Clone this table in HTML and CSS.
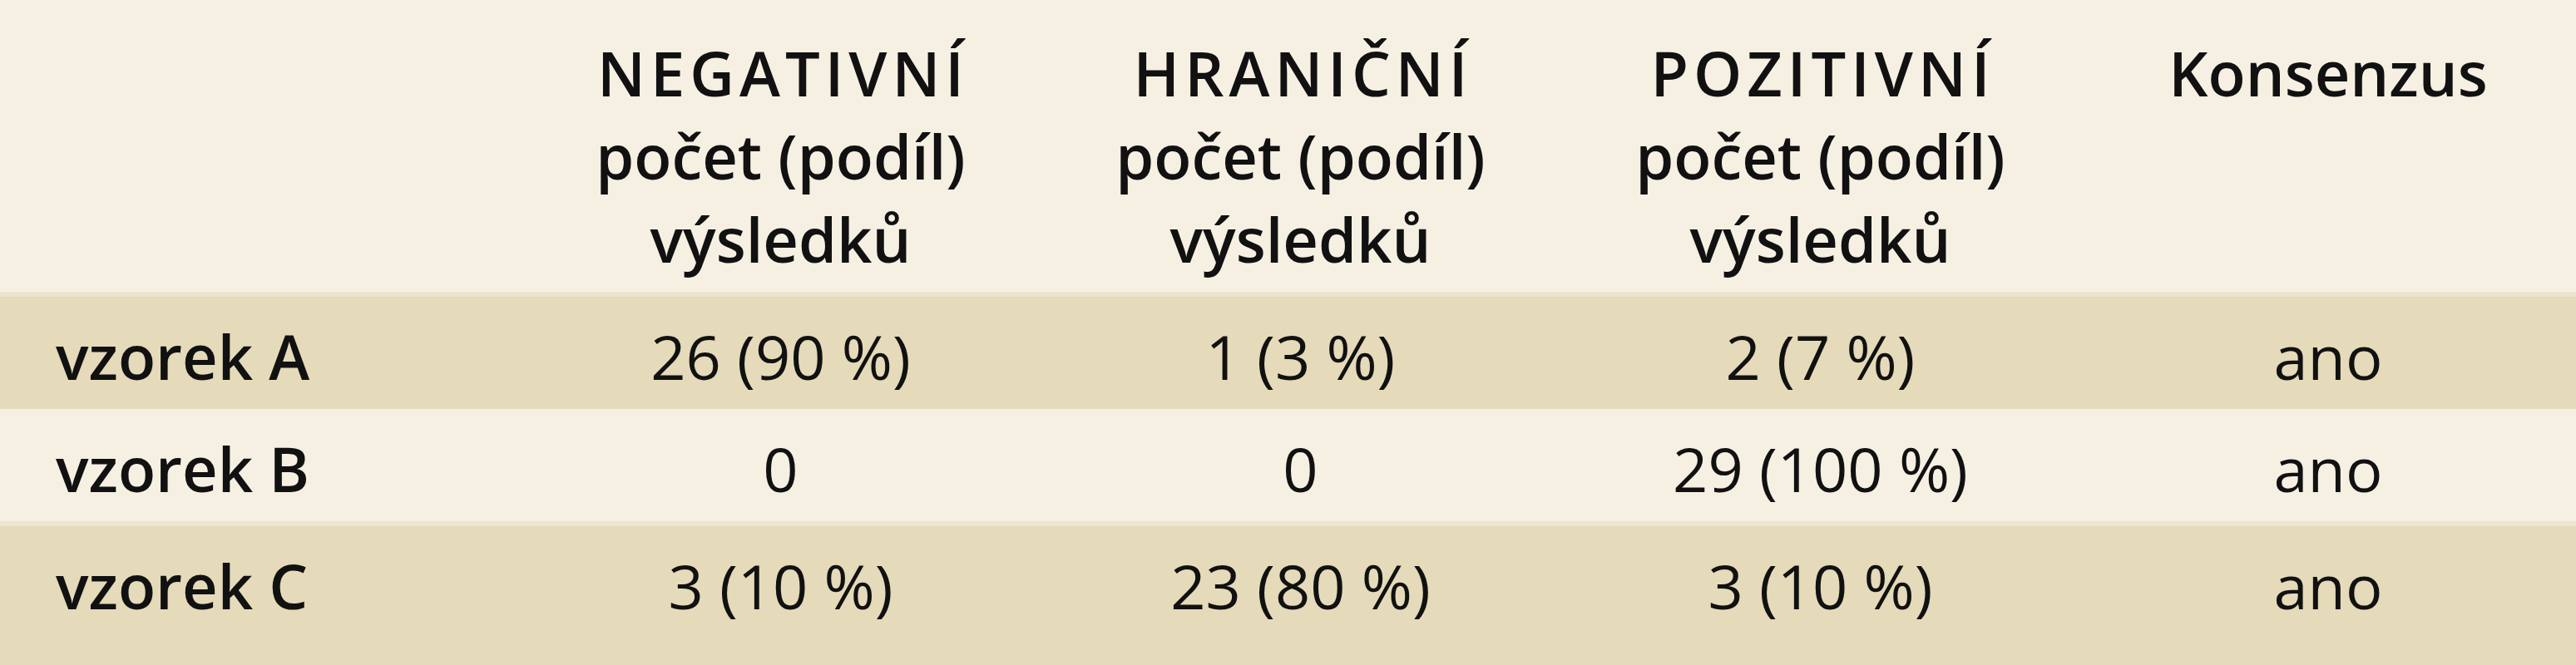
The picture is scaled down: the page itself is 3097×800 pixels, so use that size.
FILE: index.html
```html
<!DOCTYPE html>
<html lang="cs">
<head>
<meta charset="utf-8">
<title>Výsledky vzorků</title>
<link rel="stylesheet" href="styles.css">
</head>
<body>
<div class="table">
  <div class="row head">
    <div class="cell label"></div>
    <div class="cell"><span class="caps">NEGATIVNÍ</span><br>počet (podíl)<br>výsledků</div>
    <div class="cell"><span class="caps">HRANIČNÍ</span><br>počet (podíl)<br>výsledků</div>
    <div class="cell"><span class="caps">POZITIVNÍ</span><br>počet (podíl)<br>výsledků</div>
    <div class="cell">Konsenzus</div>
  </div>
  <div class="row dark">
    <div class="cell label">vzorek A</div>
    <div class="cell">26 (90 %)</div>
    <div class="cell">1 (3 %)</div>
    <div class="cell">2 (7 %)</div>
    <div class="cell">ano</div>
  </div>
  <div class="row light">
    <div class="cell label">vzorek B</div>
    <div class="cell">0</div>
    <div class="cell">0</div>
    <div class="cell">29 (100 %)</div>
    <div class="cell">ano</div>
  </div>
  <div class="row dark sep last">
    <div class="cell label">vzorek C</div>
    <div class="cell">3 (10 %)</div>
    <div class="cell">23 (80 %)</div>
    <div class="cell">3 (10 %)</div>
    <div class="cell">ano</div>
  </div>
</div>
</body>
</html>
```
FILE: styles.css
```css
html, body {
  margin: 0;
  padding: 0;
  background: #f6f0e3;
}
body {
  font-family: "Open Sans", "DejaVu Sans", sans-serif;
  font-size: 74px;
  line-height: 100px;
  color: #111;
  height: 800px;
  overflow: hidden;
}
.table {
  display: flex;
  flex-direction: column;
}
.row {
  display: grid;
  grid-template-columns: 626px 625px 625px 625px 1fr;
}
.cell {
  text-align: center;
  white-space: nowrap;
}
.cell.label {
  text-align: left;
  padding-left: 67px;
  font-weight: 600;
}
.head {
  background: #f6f0e3;
  padding: 38px 0 13px;
  font-weight: 600;
  height: 300px;
}
.caps {
  letter-spacing: 6px;
  margin-right: -6px;
}
.dark {
  background: #e5dab9;
  border-top: 6px solid #ebe5cd;
}
.light {
  background: #f6f0e3;
}
.dark .cell, .light .cell {
  padding-top: 22px;
  padding-bottom: 13px;
}
.sep {
  border-top: 6px solid #ece6cf;
}
.last .cell {
  padding-bottom: 60px;
}
```
